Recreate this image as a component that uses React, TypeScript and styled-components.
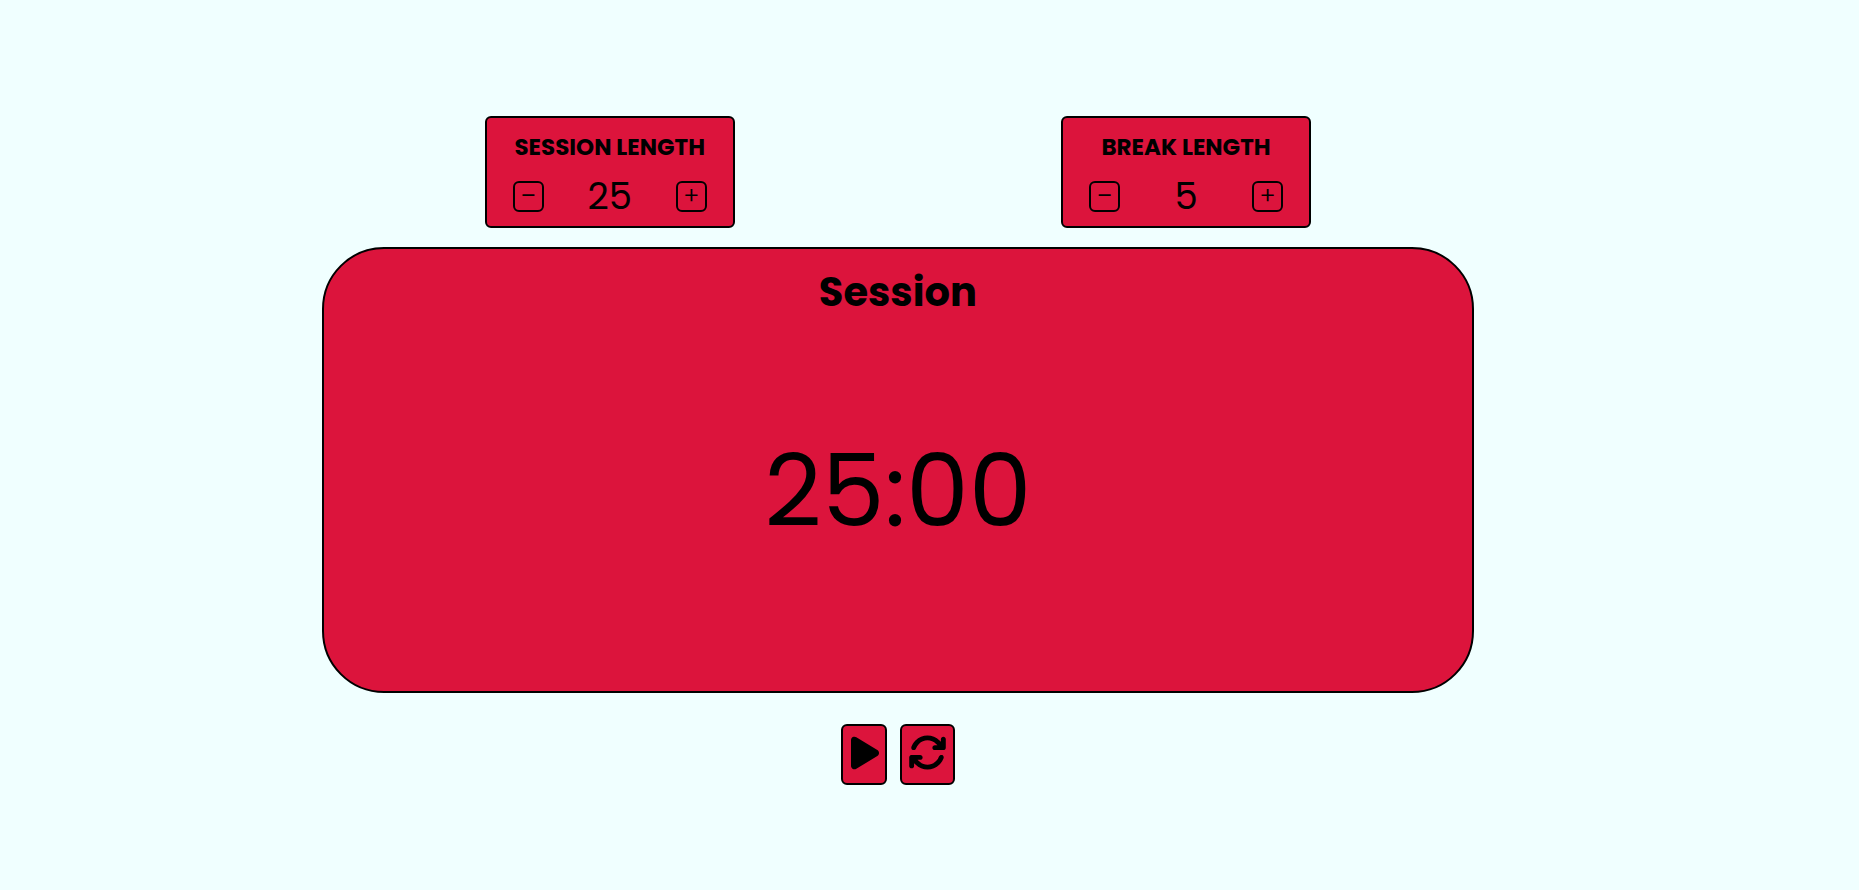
import React, { useEffect, useState } from "react";
import styled, { createGlobalStyle } from "styled-components";
import { FaArrowsRotate, FaPause, FaPlay } from "react-icons/fa6";

const GlobalStyle = createGlobalStyle`
  *, *::before, *::after { box-sizing: border-box; }
  body {
    margin: 0;
    background: azure;
    color: #000;
    font-family: Poppins, Inter, sans-serif;
  }
  h1, h2, p { margin: 0; }
  button { font-family: inherit; color: inherit; cursor: pointer; }
`;

const Clock = styled.main`
  width: 62%;
  margin-left: 17.3%;
  padding: 116px 0 48px;
  display: flex;
  flex-direction: column;
`;

const Settings = styled.div`
  display: flex;
  justify-content: space-around;
  margin-bottom: 19px;
`;

const Card = styled.section`
  width: 250px;
  padding: 11px 26px 6px;
  background: crimson;
  border: 2px solid #000;
  border-radius: 6px;
`;

const CardTitle = styled.h2`
  margin-bottom: 7px;
  font-size: 23px;
  line-height: 36px;
  font-weight: 700;
  white-space: nowrap;
  display: flex;
  justify-content: center;
`;

const Stepper = styled.div`
  display: flex;
  align-items: center;
  justify-content: space-between;
  height: 48px;
`;

const StepButton = styled.button`
  width: 31px;
  height: 31px;
  padding: 0 0 5px;
  display: flex;
  align-items: center;
  justify-content: center;
  background: transparent;
  border: 2px solid #000;
  border-radius: 6px;
  font-family: Inter, sans-serif;
  font-size: 27px;
  font-weight: 300;
  line-height: 24px;
`;

const Length = styled.output`
  font-size: 37px;
  line-height: 48px;
`;

const Display = styled.section`
  min-height: calc(50vh + 1px);
  padding-top: 13px;
  display: flex;
  flex-direction: column;
  align-items: center;
  background: crimson;
  border: 2px solid #000;
  border-radius: 62px;
`;

const Phase = styled.h1`
  font-size: 40px;
  line-height: 60px;
  font-weight: 700;
`;

const Time = styled.p`
  margin: auto 0;
  padding-bottom: 31px;
  font-size: 100px;
  line-height: 150px;
`;

const Controls = styled.div`
  display: flex;
  justify-content: center;
  gap: 13px;
  margin-top: 31px;
`;

const ControlButton = styled.button`
  height: 61px;
  padding: 0 6px 4px;
  display: flex;
  align-items: center;
  background: crimson;
  border: 2px solid #000;
  border-radius: 6px;
  font-size: 39px;
`;

const PlayIcon = styled(FaPlay)`
  width: 30px;
  height: 38px;
  padding-left: 2px;
`;

const PauseIcon = styled(FaPause)`
  width: 30px;
`;

type LengthCardProps = {
  title: string;
  value: number;
  onChange: (value: number) => void;
};

function LengthCard({ title, value, onChange }: LengthCardProps) {
  return (
    <Card aria-label={title}>
      <CardTitle>{title}</CardTitle>
      <Stepper>
        <StepButton aria-label={`Decrease ${title}`} onClick={() => onChange(Math.max(1, value - 1))}>
          −
        </StepButton>
        <Length>{value}</Length>
        <StepButton aria-label={`Increase ${title}`} onClick={() => onChange(Math.min(60, value + 1))}>
          +
        </StepButton>
      </Stepper>
    </Card>
  );
}

const pad = (n: number) => String(n).padStart(2, "0");

export default function App() {
  const [session, setSession] = useState(25);
  const [rest, setRest] = useState(5);
  const [phase, setPhase] = useState<"Session" | "Break">("Session");
  const [seconds, setSeconds] = useState(25 * 60);
  const [running, setRunning] = useState(false);

  useEffect(() => {
    if (!running) return;
    const timer = setTimeout(() => {
      if (seconds > 0) {
        setSeconds(seconds - 1);
      } else {
        setSeconds((phase === "Session" ? rest : session) * 60);
        setPhase(phase === "Session" ? "Break" : "Session");
      }
    }, 1000);
    return () => clearTimeout(timer);
  }, [running, seconds, phase, rest, session]);

  const changeSession = (value: number) => {
    setSession(value);
    if (!running && phase === "Session") setSeconds(value * 60);
  };

  const changeRest = (value: number) => {
    setRest(value);
    if (!running && phase === "Break") setSeconds(value * 60);
  };

  const reset = () => {
    setRunning(false);
    setSession(25);
    setRest(5);
    setPhase("Session");
    setSeconds(25 * 60);
  };

  return (
    <>
      <GlobalStyle />
      <Clock>
        <Settings>
          <LengthCard title="SESSION LENGTH" value={session} onChange={changeSession} />
          <LengthCard title="BREAK LENGTH" value={rest} onChange={changeRest} />
        </Settings>
        <Display>
          <Phase>{phase}</Phase>
          <Time role="timer">{`${pad(Math.floor(seconds / 60))}:${pad(seconds % 60)}`}</Time>
        </Display>
        <Controls>
          <ControlButton aria-label={running ? "Pause" : "Start"} onClick={() => setRunning(!running)}>
            {running ? <PauseIcon /> : <PlayIcon />}
          </ControlButton>
          <ControlButton aria-label="Reset" onClick={reset}>
            <FaArrowsRotate />
          </ControlButton>
        </Controls>
      </Clock>
    </>
  );
}
